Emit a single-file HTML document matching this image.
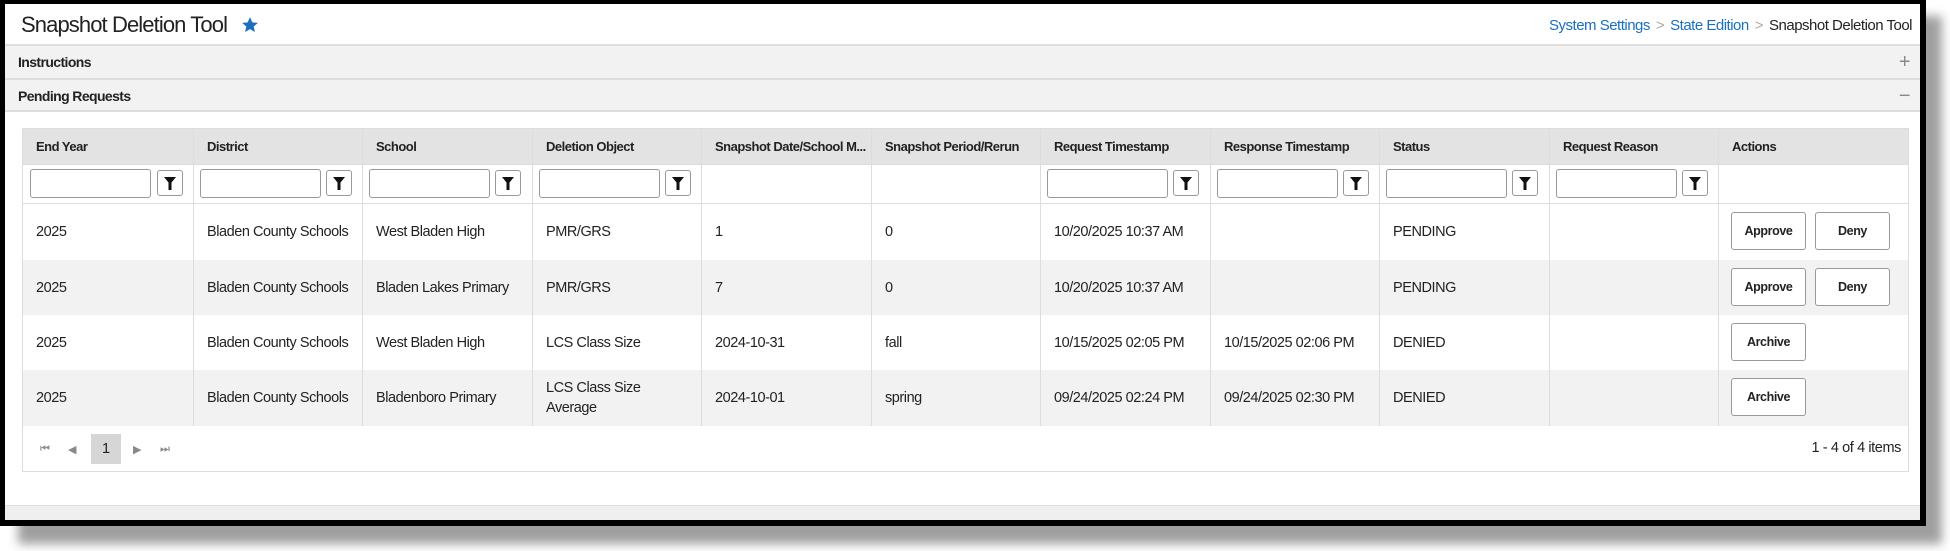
<!DOCTYPE html>
<html><head><meta charset="utf-8"><style>
*{box-sizing:border-box;margin:0;padding:0}
html,body{width:1950px;height:551px;overflow:hidden;background:#fff;font-family:"Liberation Sans",sans-serif;color:#222}
.shadow{position:absolute;left:18px;top:16px;width:1924px;height:528px;background:#888;filter:blur(5px);opacity:.8}
.frame{position:absolute;left:0;top:0;width:1926px;height:526px;background:#000}
.page{position:absolute;left:5px;top:4px;width:1915px;height:516px;background:#fff;overflow:hidden}
.title{position:absolute;left:16px;top:8px;font-size:22px;color:#222;letter-spacing:-.9px}
.star{position:absolute;left:236px;top:12px}
.crumb{position:absolute;right:8px;top:13px;font-size:15px;color:#222;letter-spacing:-.5px}
.crumb a{color:#1a6fc0;text-decoration:none}
.crumb .sep{color:#aaa;margin:0 6px}
.bar{position:absolute;left:0;width:1915px;background:#f2f2f2;border-top:2px solid #dedede;font-weight:bold;font-size:14px;padding-left:13px;color:#222;letter-spacing:-.6px}
.bar .ic{position:absolute;right:10px;color:#888;font-weight:normal;font-size:20px}
.bottom{position:absolute;left:0;top:501px;width:1915px;height:15px;background:#efefef;border-top:1px solid #ddd}
.tbl{position:absolute;left:17px;top:124px;width:1887px;height:344px;border:1px solid #ddd}
.row{position:absolute;left:0;width:1885px}
.cell{position:absolute;top:0;height:100%;border-left:1px solid #ddd;padding-left:13px;font-size:14.5px;display:flex;align-items:center;line-height:20px;letter-spacing:-.45px;white-space:nowrap}
.cell:first-child{border-left:none}
.hdr .cell{font-weight:bold;font-size:13px;letter-spacing:-.5px}
.inp{position:absolute;top:5px;width:121px;height:29px;border:1px solid #999;border-radius:3px;background:#fff}
.fb{position:absolute;top:6px;width:26px;height:26px;border:1px solid #999;border-radius:3px;background:#fff}
.fb svg{position:absolute;left:6px;top:6px}
.btn{position:absolute;height:38px;border:1px solid #999;border-radius:3px;background:#fff;font-weight:bold;font-size:12.5px;display:flex;align-items:center;justify-content:center;letter-spacing:-.4px}
.pg{position:absolute;font-size:11px;color:#888}
</style></head><body>
<div class="shadow"></div>
<div class="frame"></div>
<div class="page">
<div class="title">Snapshot Deletion Tool</div>
<svg class="star" width="18" height="18" viewBox="0 0 24 24"><path d="M12 1.5l3.1 7 7.4.6-5.6 4.9 1.7 7.4L12 17.5l-6.6 3.9 1.7-7.4L1.5 9.1l7.4-.6z" fill="#1a6fc0"/></svg>
<div class="crumb"><a>System Settings</a><span class="sep">&gt;</span><a>State Edition</a><span class="sep">&gt;</span>Snapshot Deletion Tool</div>
<div class="bar" style="top:40px;height:34px;line-height:32px">Instructions<span class="ic">+</span></div>
<div class="bar" style="top:74px;height:34px;line-height:32px;border-bottom:2px solid #dedede">Pending Requests<span class="ic">−</span></div>
<div class="bottom"></div>
<div class="tbl">
<div class="row hdr" style="top:0;height:35px;background:#e3e3e3">
<div class="cell" style="left:0;width:170px">End Year</div>
<div class="cell" style="left:170px;width:170px">District</div>
<div class="cell" style="left:339px;width:170px">School</div>
<div class="cell" style="left:509px;width:170px">Deletion Object</div>
<div class="cell" style="left:678px;width:170px">Snapshot Date/School M...</div>
<div class="cell" style="left:848px;width:170px">Snapshot Period/Rerun</div>
<div class="cell" style="left:1017px;width:170px">Request Timestamp</div>
<div class="cell" style="left:1187px;width:170px">Response Timestamp</div>
<div class="cell" style="left:1356px;width:170px">Status</div>
<div class="cell" style="left:1526px;width:170px">Request Reason</div>
<div class="cell" style="left:1695px;width:190px">Actions</div>
</div>
<div class="row" style="top:35px;height:40px;border-top:1px solid #ddd;border-bottom:1px solid #ddd">
<div class="cell" style="left:0;width:170px"></div><div class="cell" style="left:170px;width:170px"></div><div class="cell" style="left:339px;width:170px"></div><div class="cell" style="left:509px;width:170px"></div><div class="cell" style="left:678px;width:170px"></div><div class="cell" style="left:848px;width:170px"></div><div class="cell" style="left:1017px;width:170px"></div><div class="cell" style="left:1187px;width:170px"></div><div class="cell" style="left:1356px;width:170px"></div><div class="cell" style="left:1526px;width:170px"></div><div class="cell" style="left:1695px;width:190px"></div>
</div>
<div class="row" style="top:75px;height:56px;background:#fff">
<div class="cell" style="left:0;width:170px">2025</div><div class="cell" style="left:170px;width:170px">Bladen County Schools</div><div class="cell" style="left:339px;width:170px">West Bladen High</div><div class="cell" style="left:509px;width:170px">PMR/GRS</div><div class="cell" style="left:678px;width:170px">1</div><div class="cell" style="left:848px;width:170px">0</div><div class="cell" style="left:1017px;width:170px">10/20/2025 10:37 AM</div><div class="cell" style="left:1187px;width:170px"></div><div class="cell" style="left:1356px;width:170px">PENDING</div><div class="cell" style="left:1526px;width:170px"></div><div class="cell" style="left:1695px;width:190px"></div>
</div>
<div class="row" style="top:131px;height:55px;background:#f2f2f2">
<div class="cell" style="left:0;width:170px">2025</div><div class="cell" style="left:170px;width:170px">Bladen County Schools</div><div class="cell" style="left:339px;width:170px">Bladen Lakes Primary</div><div class="cell" style="left:509px;width:170px">PMR/GRS</div><div class="cell" style="left:678px;width:170px">7</div><div class="cell" style="left:848px;width:170px">0</div><div class="cell" style="left:1017px;width:170px">10/20/2025 10:37 AM</div><div class="cell" style="left:1187px;width:170px"></div><div class="cell" style="left:1356px;width:170px">PENDING</div><div class="cell" style="left:1526px;width:170px"></div><div class="cell" style="left:1695px;width:190px"></div>
</div>
<div class="row" style="top:186px;height:55px;background:#fff">
<div class="cell" style="left:0;width:170px">2025</div><div class="cell" style="left:170px;width:170px">Bladen County Schools</div><div class="cell" style="left:339px;width:170px">West Bladen High</div><div class="cell" style="left:509px;width:170px">LCS Class Size</div><div class="cell" style="left:678px;width:170px">2024-10-31</div><div class="cell" style="left:848px;width:170px">fall</div><div class="cell" style="left:1017px;width:170px">10/15/2025 02:05 PM</div><div class="cell" style="left:1187px;width:170px">10/15/2025 02:06 PM</div><div class="cell" style="left:1356px;width:170px">DENIED</div><div class="cell" style="left:1526px;width:170px"></div><div class="cell" style="left:1695px;width:190px"></div>
</div>
<div class="row" style="top:241px;height:56px;background:#f2f2f2">
<div class="cell" style="left:0;width:170px">2025</div><div class="cell" style="left:170px;width:170px">Bladen County Schools</div><div class="cell" style="left:339px;width:170px">Bladenboro Primary</div><div class="cell" style="left:509px;width:170px">LCS Class Size<br>Average</div><div class="cell" style="left:678px;width:170px">2024-10-01</div><div class="cell" style="left:848px;width:170px">spring</div><div class="cell" style="left:1017px;width:170px">09/24/2025 02:24 PM</div><div class="cell" style="left:1187px;width:170px">09/24/2025 02:30 PM</div><div class="cell" style="left:1356px;width:170px">DENIED</div><div class="cell" style="left:1526px;width:170px"></div><div class="cell" style="left:1695px;width:190px"></div>
</div>
<div style="position:absolute;top:35px;left:0;width:1885px;height:40px">
<div class="inp" style="left:7px"></div><div class="fb" style="left:134px"><svg width="12" height="13" viewBox="0 0 12 13"><path d="M0 0h12L7.5 5.5V13h-3V5.5z" fill="#111"/></svg></div>
<div class="inp" style="left:177px"></div><div class="fb" style="left:303px"><svg width="12" height="13" viewBox="0 0 12 13"><path d="M0 0h12L7.5 5.5V13h-3V5.5z" fill="#111"/></svg></div>
<div class="inp" style="left:346px"></div><div class="fb" style="left:472px"><svg width="12" height="13" viewBox="0 0 12 13"><path d="M0 0h12L7.5 5.5V13h-3V5.5z" fill="#111"/></svg></div>
<div class="inp" style="left:516px"></div><div class="fb" style="left:642px"><svg width="12" height="13" viewBox="0 0 12 13"><path d="M0 0h12L7.5 5.5V13h-3V5.5z" fill="#111"/></svg></div>
<div class="inp" style="left:1024px"></div><div class="fb" style="left:1150px"><svg width="12" height="13" viewBox="0 0 12 13"><path d="M0 0h12L7.5 5.5V13h-3V5.5z" fill="#111"/></svg></div>
<div class="inp" style="left:1194px"></div><div class="fb" style="left:1320px"><svg width="12" height="13" viewBox="0 0 12 13"><path d="M0 0h12L7.5 5.5V13h-3V5.5z" fill="#111"/></svg></div>
<div class="inp" style="left:1363px"></div><div class="fb" style="left:1489px"><svg width="12" height="13" viewBox="0 0 12 13"><path d="M0 0h12L7.5 5.5V13h-3V5.5z" fill="#111"/></svg></div>
<div class="inp" style="left:1533px"></div><div class="fb" style="left:1659px"><svg width="12" height="13" viewBox="0 0 12 13"><path d="M0 0h12L7.5 5.5V13h-3V5.5z" fill="#111"/></svg></div>
</div>
<div class="btn" style="left:1708px;top:83px;width:75px">Approve</div>
<div class="btn" style="left:1792px;top:83px;width:75px">Deny</div>
<div class="btn" style="left:1708px;top:139px;width:75px">Approve</div>
<div class="btn" style="left:1792px;top:139px;width:75px">Deny</div>
<div class="btn" style="left:1708px;top:194px;width:75px">Archive</div>
<div class="btn" style="left:1708px;top:249px;width:75px">Archive</div>
<div class="pg" style="left:17px;top:314px">⏮</div>
<div class="pg" style="left:45px;top:314px">◀</div>
<div style="position:absolute;left:68px;top:305px;width:30px;height:30px;background:#d6d6d6;font-size:14.5px;display:flex;align-items:center;justify-content:center">1</div>
<div class="pg" style="left:110px;top:314px">▶</div>
<div class="pg" style="left:137px;top:314px">⏭</div>
<div style="position:absolute;right:7px;top:311px;font-size:14.5px;letter-spacing:-.4px">1 - 4 of 4 items</div>
</div>
</div>
</body></html>
